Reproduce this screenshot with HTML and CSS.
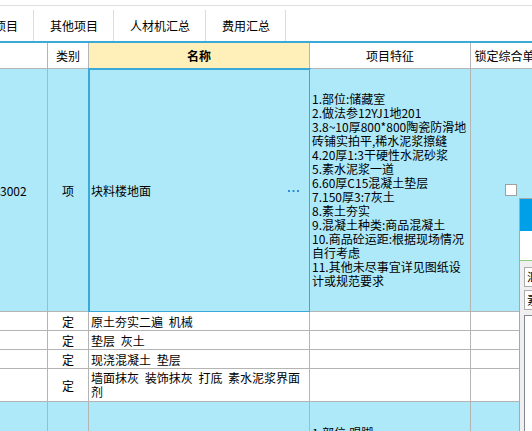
FILE: index.html
```html
<!DOCTYPE html>
<html lang="zh-CN">
<head>
<meta charset="utf-8">
<title>分部分项</title>
<link rel="stylesheet" href="styles.css">
</head>
<body>
<div class="page">
  <div class="tabbar">
    <div class="tabs">
      <div class="tab">措施项目</div>
      <div class="tab">其他项目</div>
      <div class="tab">人材机汇总</div>
      <div class="tab">费用汇总</div>
    </div>
  </div>
  <div class="grid">
    <div class="cell head"></div>
    <div class="cell head center">类别</div>
    <div class="cell head center name-head">名称</div>
    <div class="cell head center">项目特征</div>
    <div class="cell head center nowrap">锁定综合单价</div>

    <div class="cell blue code">3002</div>
    <div class="cell blue center">项</div>
    <div class="cell blue name selected"><span>块料楼地面</span><svg class="dots" width="11" height="2" viewBox="0 0 11 2"><rect x="0" y="0" width="2" height="2"/><rect x="4.5" y="0" width="2" height="2"/><rect x="9" y="0" width="2" height="2"/></svg></div>
    <div class="cell blue desc"><div class="lines">1.部位:储藏室<br>2.做法参12YJ1地201<br>3.8~10厚800*800陶瓷防滑地<br>砖铺实拍平,稀水泥浆擦缝<br>4.20厚1:3干硬性水泥砂浆<br>5.素水泥浆一道<br>6.60厚C15混凝土垫层<br>7.150厚3:7灰土<br>8.素土夯实<br>9.混凝土种类:商品混凝土<br>10.商品砼运距:根据现场情况<br>自行考虑<br>11.其他未尽事宜详见图纸设<br>计或规范要求</div></div>
    <div class="cell blue center"><span class="check"></span></div>

    <div class="cell"></div>
    <div class="cell center">定</div>
    <div class="cell name">原土夯实二遍 机械</div>
    <div class="cell"></div>
    <div class="cell"></div>

    <div class="cell"></div>
    <div class="cell center">定</div>
    <div class="cell name">垫层 灰土</div>
    <div class="cell"></div>
    <div class="cell"></div>

    <div class="cell"></div>
    <div class="cell center">定</div>
    <div class="cell name">现浇混凝土 垫层</div>
    <div class="cell"></div>
    <div class="cell"></div>

    <div class="cell"></div>
    <div class="cell center">定</div>
    <div class="cell name"><div class="lines">墙面抹灰 装饰抹灰 打底 素水泥浆界面<br>剂</div></div>
    <div class="cell"></div>
    <div class="cell"></div>

    <div class="cell blue"></div>
    <div class="cell blue"></div>
    <div class="cell blue"></div>
    <div class="cell blue desc top"><div class="lines">1.部位:踢脚<br>2.做法参12YJ1踢1</div></div>
    <div class="cell blue"></div>
  </div>

  <div class="panel">
    <div class="ptitle"></div>
    <div class="pwhite"></div>
    <div class="pbody">
      <div class="pbox">汇总</div>
      <div class="pbox">素水泥</div>
      <div class="plist"></div>
    </div>
  </div>
</div>
</body>
</html>
```

FILE: styles.css
```css
html, body {
  margin: 0;
  padding: 0;
  overflow: hidden;
  background: #ffffff;
}

.page {
  position: relative;
  width: 532px;
  height: 431px;
  overflow: hidden;
  background: #ffffff;
  font-family: "Noto Sans CJK SC", "Noto Sans", sans-serif;
  font-size: 12px;
  color: #000000;
  word-spacing: 3px;
}

.tabbar {
  margin-top: 5px;
  border-top: 1px solid #dedede;
  border-bottom: 2px solid #3aa9d8;
  padding-top: 4px;
  overflow: hidden;
}

.tabs {
  display: flex;
  margin-left: -46px;
}

.tab {
  height: 31px;
  line-height: 31px;
  padding: 0 15px 0 16px;
  border-right: 1px solid #dcdcdc;
  white-space: nowrap;
  flex: none;
}

.grid {
  display: grid;
  grid-template-columns: 48px 41px 221px 161px 80px;
  grid-template-rows: 26px 243px 19px 19px 19px 33px 60px;
  width: 551px;
}

.cell {
  box-sizing: border-box;
  border-right: 1px solid #b4b4b4;
  border-bottom: 1px solid #b4b4b4;
  display: flex;
  align-items: center;
  overflow: hidden;
  white-space: nowrap;
  background: #ffffff;
}

.head {
  background: #ffffff;
}

.name-head {
  background: #fff0b9;
  font-weight: bold;
}

.center {
  justify-content: center;
}

.nowrap {
  white-space: nowrap;
}

.blue {
  background: #aee9fa;
}

.code {
  padding-left: 0;
}

.name {
  padding-left: 2px;
}

.lines {
  line-height: 14px;
}

.desc {
  padding-left: 2px;
}

.desc.top {
  align-items: flex-start;
  padding-top: 24px;
}

.selected {
  justify-content: space-between;
  padding-right: 10px;
  outline: 2px solid #3aa9d8;
  outline-offset: -1px;
}

.dots {
  display: block;
  fill: #2f8fd6;
  margin-top: 1px;
}

.check {
  display: block;
  box-sizing: border-box;
  width: 12px;
  height: 12px;
  border: 1px solid #a0a0a0;
  background: #ffffff;
  margin-top: -1px;
}

.panel {
  position: absolute;
  left: 519px;
  top: 198px;
  bottom: 0;
  width: 200px;
  box-sizing: border-box;
  border-top: 1px solid #a9a9a9;
  border-left: 1px solid #a9a9a9;
  background: #f0f0f0;
  display: flex;
  flex-direction: column;
}

.ptitle {
  height: 32px;
  background: #00a0e9;
  flex: none;
}

.pwhite {
  height: 29px;
  background: #ffffff;
  border-bottom: 1px solid #8ccf7e;
  flex: none;
}

.pbody {
  flex: 1;
  display: flex;
  flex-direction: column;
  padding: 6px 0 0 4px;
}

.pbox {
  box-sizing: border-box;
  height: 20px;
  line-height: 18px;
  border: 1px solid #acacac;
  background: #ffffff;
  padding-left: 2px;
  margin-bottom: 3px;
  white-space: nowrap;
  flex: none;
}

.pbox + .pbox {
  margin-bottom: 5px;
}

.plist {
  flex: 1;
  border-top: 1px solid #828790;
  border-left: 1px solid #828790;
  background: #ffffff;
}
```
